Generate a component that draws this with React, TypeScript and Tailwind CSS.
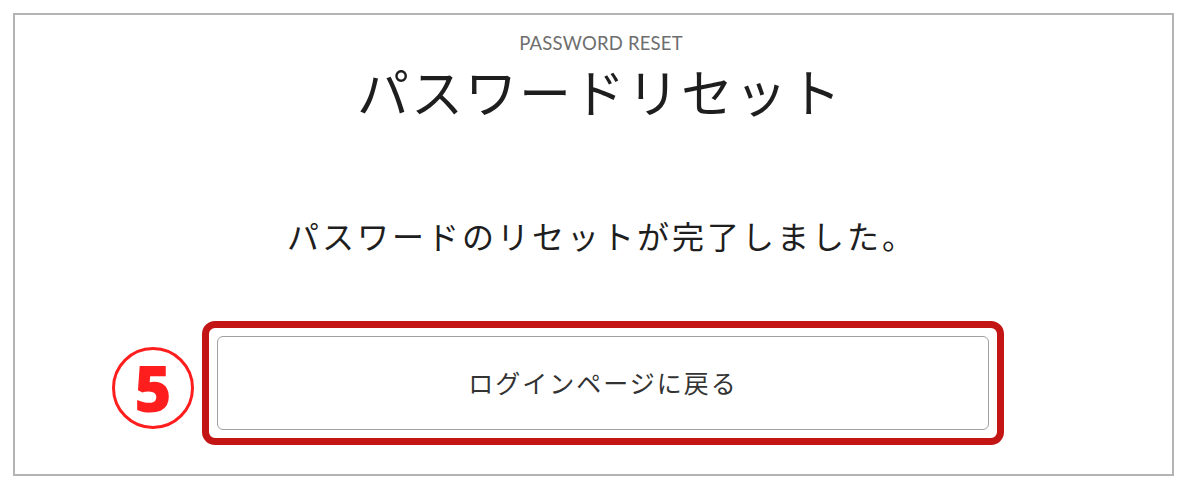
import React from "react";

export default function App() {
  return (
    <div className="w-[1186px] h-[486px] bg-white pt-[13px] pl-[13px]">
      <div className="w-[1161px] h-[463px] border-2 border-[#b4b4b4] flex flex-col items-center font-['Noto_Sans_CJK_JP','Noto_Sans',sans-serif]">
        <div className="mt-[16px] ml-[15px] text-[18.5px] leading-[24px] text-[#6e6e6e] tracking-[0.2px] font-['Lato','Noto_Sans',sans-serif]">
          PASSWORD RESET
        </div>
        <h1 className="mt-[6px] ml-[13px] text-[52px] leading-[60px] text-[#1e1e1e] tracking-[2px] font-normal">
          パスワードリセット
        </h1>
        <p className="mt-[94px] ml-[17px] text-[32px] leading-[40px] text-[#1e1e1e] tracking-[3px]">
          パスワードのリセットが完了しました。
        </p>
        <div className="relative self-start ml-[187px] mt-[66px]">
          <div className="absolute left-[-90px] top-[26px] w-[82px] h-[82px] rounded-full border-[3px] border-[#ff1e1e] flex items-center justify-center text-[#ff1e1e] text-[64px] font-extrabold leading-none font-['Open_Sans','Liberation_Sans',sans-serif]">
            5
          </div>
          <div className="w-[802px] h-[124px] border-[7px] border-[#c41515] rounded-[13px] p-[8px]">
            <button className="w-full h-full border border-[#a0a0a0] rounded-[6px] bg-white flex items-center justify-center text-[25px] text-[#333] tracking-[2px]">
              ログインページに戻る
            </button>
          </div>
        </div>
      </div>
    </div>
  );
}
